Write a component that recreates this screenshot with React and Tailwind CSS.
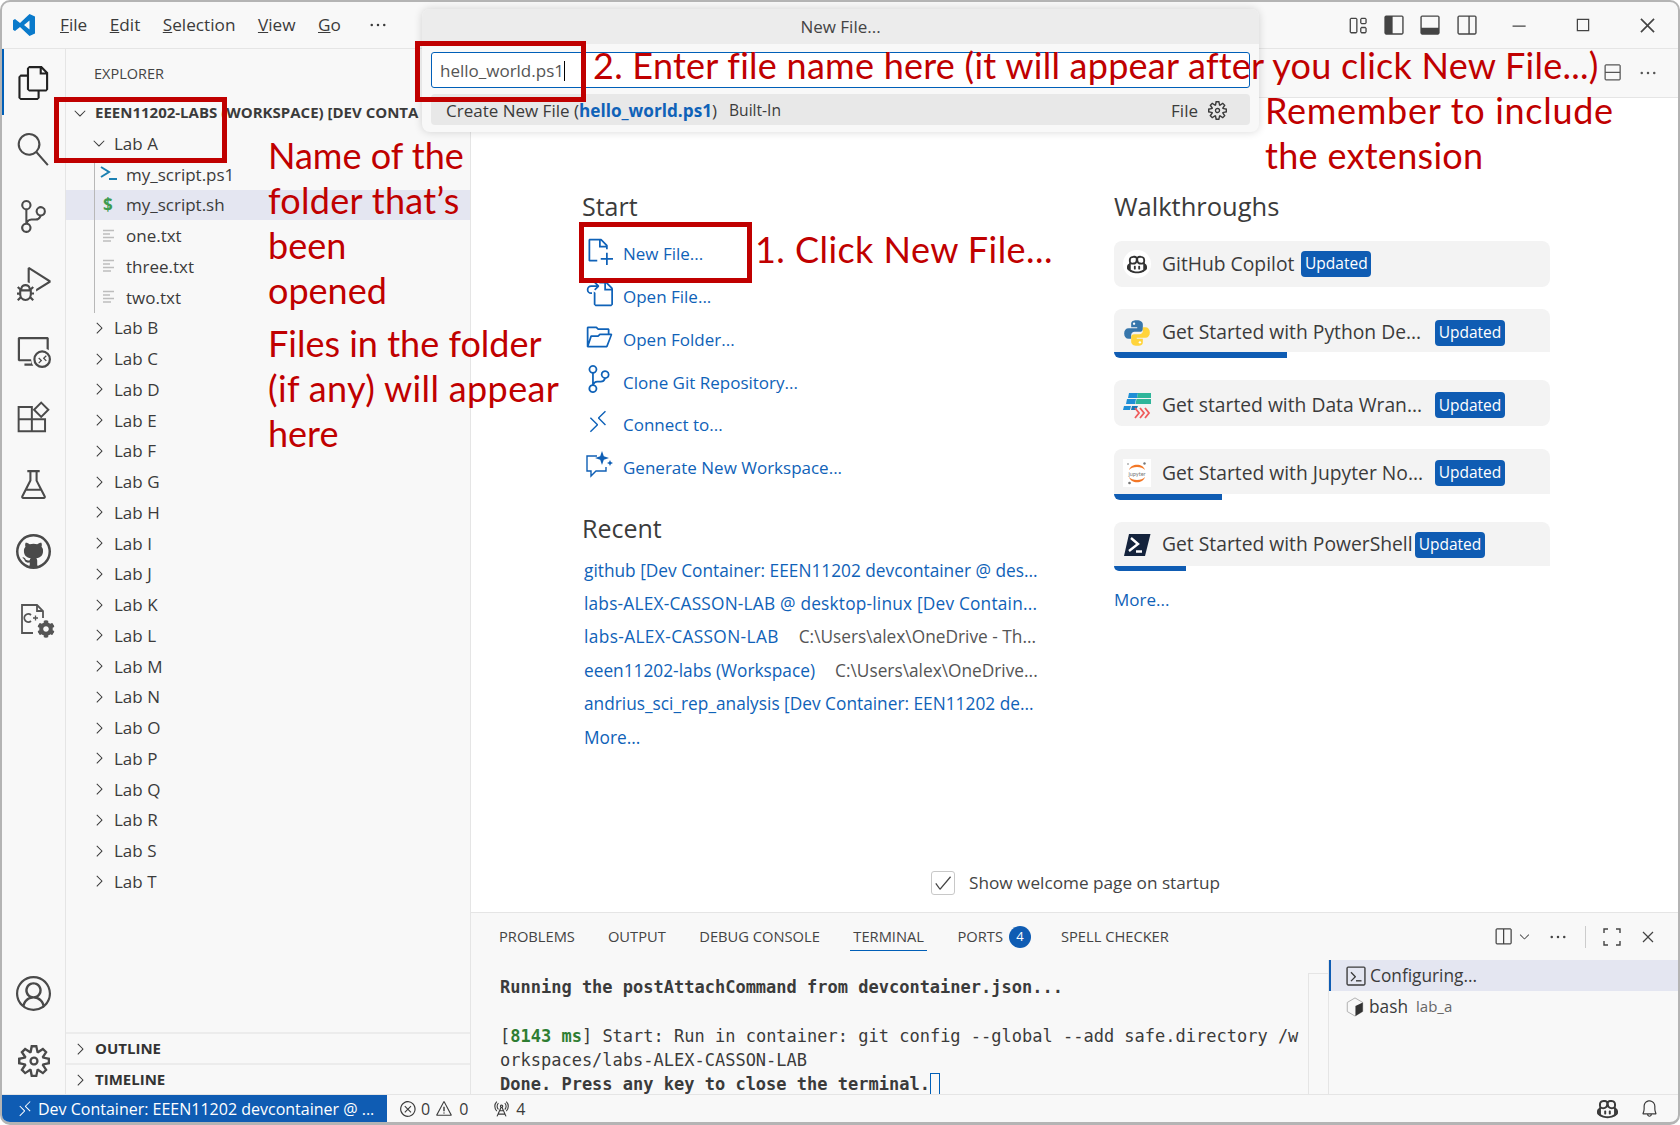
import React from 'react';
import { FaCog } from 'react-icons/fa';
import {
  VscFiles, VscSearch, VscSourceControl, VscDebugAlt, VscRemoteExplorer, VscBeaker,
  VscGithub, VscAccount, VscSettingsGear, VscChevronRight, VscChevronDown, VscLayout,
  VscLayoutSidebarLeft, VscLayoutPanel, VscLayoutSidebarRightOff, VscChromeMinimize, VscChromeMaximize,
  VscChromeClose, VscEllipsis, VscNewFile, VscGoToFile, VscFolderOpened, VscRemote, VscCopilot,
  VscSplitHorizontal, VscSplitVertical, VscBell, VscError, VscWarning, VscRadioTower, VscTerminal,
  VscClose, VscCheck,
} from 'react-icons/vsc';

const labs = 'BCDEFGHIJKLMNOPQRST'.split('');

const recent = [
  ['github [Dev Container: EEEN11202 devcontainer @ des...', '', ''],
  ['labs-ALEX-CASSON-LAB @ desktop-linux [Dev Contain...', '', 'tracking-[0.2px]'],
  ['labs-ALEX-CASSON-LAB', 'C:\\Users\\alex\\OneDrive - Th...', 'tracking-[0.37px]'],
  ['eeen11202-labs (Workspace)', 'C:\\Users\\alex\\OneDrive...', ''],
  ['andrius_sci_rep_analysis [Dev Container: EEN11202 de...', '', ''],
  ['More...', '', ''],
];

const PythonLogo = () => (
  <svg viewBox="0 0 24 24" className="w-7 h-7">
    <path fill="#3776ab" d="M12 1C7 1 7 3 7 4.500V7h5.200v1H4.800C2.500 8 1 9.700 1 12.500S2.500 17 4.800 17H7v-3c0-1.800 1.200-3 3-3h4.500c1.500 0 2.500-1 2.500-2.500V4.500C17 2.500 15 1 12 1z" />
    <circle cx="9.500" cy="4" r="1" fill="#fff" />
    <path fill="#ffd43b" d="M12 23c5 0 5-2 5-3.500V17h-5.200v-1h7.400c2.300 0 3.800-1.700 3.800-4.500S21.500 7 19.200 7H17v3c0 1.800-1.200 3-3 3H9.500C8 13 7 14 7 15.500v4C7 21.500 9 23 12 23z" />
    <circle cx="14.500" cy="20" r="1" fill="#fff" />
  </svg>
);

const WranglerLogo = () => (
  <svg viewBox="0 0 28 28" className="w-7 h-7">
    <path fill="#1f8fd6" d="M6 2h9l-1 5H5zM4 8h9l-1 5H3zM1 15h7l-1 4H0z" />
    <path fill="#2fb59a" d="M15 2h13v5H14zM13.500 8H28v5H12.500z" />
    <path fill="#1678b8" d="M9 15h6l-2 4H8z" />
    <path fill="none" stroke="#ef5b5b" strokeWidth="1.800" d="M12 17l4 5-4 5M17 17l4 5-4 5M22 17l4 5-4 5" />
  </svg>
);

const JupyterLogo = () => (
  <svg viewBox="0 0 28 28" className="w-7 h-7 bg-white">
    <path fill="#f37726" d="M6 11C8 4 20 4 22 11 19 7 9 7 6 11zM6 18C8 25 20 25 22 18 19 22 9 22 6 18z" />
    <text x="14" y="16.500" fontSize="5.500" textAnchor="middle" fill="#777" fontFamily="Lato, sans-serif">jupyter</text>
    <circle cx="21.500" cy="4.500" r="1.200" fill="#777" />
    <circle cx="6.500" cy="24" r="1.300" fill="#777" />
    <circle cx="5" cy="5" r="0.800" fill="#777" />
  </svg>
);

const PowerShellLogo = () => (
  <svg viewBox="0 0 28 28" className="w-7 h-7">
    <path fill="#14233c" d="M6 3h21.500L22 25H1z" />
    <path fill="none" stroke="#fff" strokeWidth="2.400" d="M8 7l7 6-9 7M13 20.500h6" />
  </svg>
);

const walkthroughs = [
  { title: 'GitHub Copilot', icon: <span className="w-7 h-7 rounded-full bg-white flex items-center justify-center text-[#333]"><VscCopilot size={20} /></span>, bg: 'h-[46px]', bar: '', end: 'ml-[7px]' },
  { title: 'Get Started with Python De...', icon: <PythonLogo />, bg: 'h-[43px] pt-[4px]', bar: 'w-[173px] h-[6px]', end: 'absolute left-[321px]' },
  { title: 'Get started with Data Wran...', icon: <WranglerLogo />, bg: 'h-[46px] pt-[4px]', bar: '', end: 'absolute left-[321px]' },
  { title: 'Get Started with Jupyter No...', icon: <JupyterLogo />, bg: 'h-[45px] pt-[4px]', bar: 'w-[108px] h-[6px]', end: 'absolute left-[321px]' },
  { title: 'Get Started with PowerShell', icon: <PowerShellLogo />, bg: 'h-[44px] pt-[2px]', bar: 'w-[72px] h-[5px]', end: 'absolute left-[301px]' },
];

const ExtensionsIcon = () => (
  <svg viewBox="0 0 30 30" className="w-[33px] h-[33px]" fill="none" stroke="currentColor" strokeWidth="1.800">
    <path d="M1.500 5.500h12v22h-12zM1.500 16.500h24v11h-12M13.500 16.500v11" />
    <path d="M22 1.500L28.500 8 22 14.500 15.500 8z" />
  </svg>
);

const ScreenFullIcon = () => (
  <svg viewBox="0 0 18 18" className="w-[18px] h-[18px]" fill="none" stroke="currentColor" strokeWidth="1.400">
    <path d="M1 5V1h4M13 1h4v4M17 13v4h-4M5 17H1v-4" />
  </svg>
);

const GenerateIcon = () => (
  <svg viewBox="0 0 28 28" className="w-[28px] h-[28px]" fill="none" stroke="#0f5fb5" strokeWidth="1.400">
    <path d="M12 5H2v15h4v5l5-5h10v-4" />
    <path fill="#0f5fb5" stroke="none" d="M17 0l1.800 5.200L24 7l-5.200 1.800L17 14l-1.800-5.200L10 7l5.200-1.800zM25 9l.9 2.100L28 12l-2.100.9L25 15l-.9-2.100L22 12l2.100-.9z" />
  </svg>
);

const CppIcon = () => (
  <div className="relative w-8 h-8">
    <svg viewBox="0 0 32 32" className="w-8 h-8" fill="none" stroke="#555" strokeWidth="1.800">
      <path d="M15 30H4V2h15l6 6v7" />
      <path d="M19 2v6h6" />
      <path d="M13 12a4 4 0 1 0 0 6" />
      <path d="M15 15h5M17.500 12.500v5" strokeWidth="1.300" />
    </svg>
    <FaCog className="absolute right-[-5px] bottom-[-3px] bg-[#f8f8f8] rounded-full text-[#555]" size={18} />
  </div>
);

const BashIcon = () => (
  <svg viewBox="0 0 20 22" className="w-5 h-5">
    <path fill="none" stroke="#aaa" strokeWidth="1" d="M10 1l8.500 5v10L10 21l-8.500-5V6z" />
    <path fill="#333" d="M10.500 10l8-4v10l-8 5z" />
  </svg>
);

const PsIcon = () => (
  <svg viewBox="0 0 18 18" className="w-[18px] h-[18px]" fill="none" stroke="#1b80b2" strokeWidth="2">
    <path d="M1 2l8 5-8 5M9 14h8" />
  </svg>
);

const TxtIcon = () => (
  <svg viewBox="0 0 14 14" className="w-[14px] h-[14px] ml-[2px]" fill="none" stroke="#bdbdbd" strokeWidth="1.500">
    <path d="M1 1.500h11M1 5h7M1 8.500h11M1 12h8" />
  </svg>
);

const Row = ({ active, children }) => (
  <div className={`h-[30.75px] flex items-center shrink-0 ${active ? 'bg-[#e4e6f1]' : ''}`}>{children}</div>
);

const FileRow = ({ name, icon, active }) => (
  <Row active={active}>
    <div className="w-[28px] h-full border-l border-[#b8b8b8] ml-[28px] flex items-center pl-[5px]">{icon}</div>
    <span className="ml-[4px]">{name}</span>
  </Row>
);

const Annot = ({ className, children }) => (
  <div className={`absolute font-['Lato',sans-serif] text-[#c00000] text-[36px] leading-[45px] whitespace-nowrap ${className}`}>{children}</div>
);

const RedBox = ({ className }) => <div className={`absolute border-[5px] border-[#c00000] ${className}`} />;

const Menu = ({ first, rest }) => (
  <span><span className="underline">{first}</span>{rest}</span>
);

export default function App() {
  const activity = [
    <VscFiles size={34} className="text-[#222]" />, <VscSearch size={33} className="-scale-x-100" />, <VscSourceControl size={33} />,
    <VscDebugAlt size={34} />, <VscRemoteExplorer size={34} />, <ExtensionsIcon />, <VscBeaker size={33} />,
    <VscGithub size={35} />, <CppIcon />,
  ];

  return (
    <div className="relative w-[1680px] h-[1125px] bg-white font-['Open_Sans',sans-serif] text-[#3b3b3b] overflow-hidden">
      <div className="w-full h-full flex flex-col border-2 border-b-[3px] border-[#b4b4b4] rounded-[10px] overflow-hidden bg-[#f8f8f8]">
        {/* title bar */}
        <div className="h-[47px] shrink-0 flex items-center border-b border-[#e5e5e5] text-[17.200px]">
          <svg viewBox="0 0 24 24" className="w-[24px] h-[24px] ml-[10px]">
            <path fill="#0a7acb" d="M17.500 1L23 3.500v17L17.500 23 8 14l-5 4-2-1.200V7.200L3 6l5 4zM17.500 7.500L12 12l5.500 4.500z" />
          </svg>
          <div className="flex items-center gap-[22.500px] ml-[24px]">
            <Menu first="F" rest="ile" />
            <Menu first="E" rest="dit" />
            <Menu first="S" rest="election" />
            <Menu first="V" rest="iew" />
            <Menu first="G" rest="o" />
            <VscEllipsis size={20} className="ml-[5px]" />
          </div>
          <div className="ml-auto flex items-center text-[#444]">
            <VscLayout size={21} />
            <VscLayoutSidebarLeft size={22} className="ml-[15px]" />
            <VscLayoutPanel size={22} className="ml-[14px]" />
            <VscLayoutSidebarRightOff size={22} className="ml-[15px]" />
            <VscChromeMinimize size={19} className="ml-[31px]" />
            <VscChromeMaximize size={20} className="ml-[45px]" />
            <VscChromeClose size={21} className="ml-[44px] mr-[20px]" />
          </div>
        </div>

        <div className="flex-1 flex min-h-0">
          {/* activity bar */}
          <div className="relative w-[64px] shrink-0 flex flex-col border-r border-[#e5e5e5] text-[#4a4a4a]">
            <div className="absolute left-0 top-0 w-[2px] h-[66px] bg-[#005fb8]" />
            {activity.map((icon, i) => (
              <div key={i} className="h-[67px] flex items-center justify-center shrink-0">{icon}</div>
            ))}
            <div className="mt-auto h-[67px] flex items-center justify-center"><VscAccount size={35} /></div>
            <div className="h-[67px] flex items-center justify-center"><VscSettingsGear size={32} /></div>
          </div>

          {/* explorer */}
          <div className="w-[405px] shrink-0 flex flex-col border-r border-[#e5e5e5] text-[17px] leading-none">
            <div className="h-[48.300px] shrink-0 flex items-center pl-[28px] pt-[3px] text-[14.500px] text-[#444]">EXPLORER</div>
            <Row>
              <VscChevronDown size={18} className="ml-[5px]" />
              <span className="ml-[6px] text-[15px] font-bold whitespace-nowrap">EEEN11202-LABS (WORKSPACE) [DEV CONTA</span>
            </Row>
            <Row>
              <VscChevronDown size={18} className="ml-[24px]" />
              <span className="ml-[6px]">Lab A</span>
            </Row>
            <FileRow name="my_script.ps1" icon={<PsIcon />} />
            <FileRow name="my_script.sh" active icon={<span className="text-[#3e9b4f] font-bold text-[17px] ml-[3px]">$</span>} />
            <FileRow name="one.txt" icon={<TxtIcon />} />
            <FileRow name="three.txt" icon={<TxtIcon />} />
            <FileRow name="two.txt" icon={<TxtIcon />} />
            {labs.map((l) => (
              <Row key={l}>
                <VscChevronRight size={18} className="ml-[24px]" />
                <span className="ml-[6px]">Lab {l}</span>
              </Row>
            ))}
            <div className="mt-auto h-[31px] shrink-0 border-t-2 border-[#ececec] flex items-center">
              <VscChevronRight size={18} className="ml-[5px]" />
              <span className="ml-[6px] text-[15px] font-bold text-[#333]">OUTLINE</span>
            </div>
            <div className="h-[31px] shrink-0 border-t-2 border-[#ececec] flex items-center">
              <VscChevronRight size={18} className="ml-[5px]" />
              <span className="ml-[6px] text-[15px] font-bold text-[#333]">TIMELINE</span>
            </div>
          </div>

          {/* editor + panel */}
          <div className="flex-1 min-w-0 flex flex-col">
            <div className="h-[49px] shrink-0 border-b border-[#e5e5e5] flex items-center justify-end text-[#555]">
              <VscSplitVertical size={20} className="mr-[16px]" />
              <VscEllipsis size={20} className="mr-[20px]" />
            </div>

            <div className="flex-1 min-h-0 bg-white flex flex-col">
              <div className="flex-1 flex pt-[91px] pl-[111px]">
                <div className="w-[532px] shrink-0">
                  <div className="h-[36px] flex items-center text-[25px]">Start</div>
                  <div className="mt-[7.600px] text-[#0f62b8] text-[17px]">
                    {[
                      [<VscNewFile size={28} />, 'New File...'],
                      [<VscGoToFile size={28} />, 'Open File...'],
                      [<VscFolderOpened size={28} />, 'Open Folder...'],
                      [<VscSourceControl size={28} />, 'Clone Git Repository...'],
                      [<VscRemote size={26} />, 'Connect to...'],
                      [<GenerateIcon />, 'Generate New Workspace...'],
                    ].map(([icon, label]) => (
                      <div key={label} className="h-[42.800px] flex items-center">
                        <span className="w-[41px] pl-[3px] -mt-[6px] shrink-0">{icon}</span>
                        {label}
                      </div>
                    ))}
                  </div>
                  <div className="mt-[21.600px] h-[36px] flex items-center text-[25px]">Recent</div>
                  <div className="mt-[7px] pl-[2px] text-[17.300px]">
                    {recent.map(([link, path, spacing]) => (
                      <div key={link} className="h-[33.400px] flex items-center whitespace-nowrap">
                        <span className={`text-[#0f62b8] ${spacing}`}>{link}</span>
                        {path && <span className="ml-[20px] text-[#555]">{path}</span>}
                      </div>
                    ))}
                  </div>
                </div>

                <div className="w-[436px]">
                  <div className="h-[35px] flex items-center text-[25.500px]">Walkthroughs</div>
                  <div className="mt-[17px] flex flex-col gap-[22.200px]">
                    {walkthroughs.map((w) => (
                      <div key={w.title}>
                        <div className={`relative flex items-center bg-[#f3f3f3] rounded-t-lg pl-[9px] ${w.bar ? '' : 'rounded-b-lg'} ${w.bg}`}>
                          {w.icon}
                          <span className="ml-[11px] text-[19.300px] whitespace-nowrap">{w.title}</span>
                          <span className={`h-[26px] w-[70px] rounded-[4px] bg-[#0f5cb3] text-white text-[15.500px] flex items-center justify-center ${w.end}`}>Updated</span>
                        </div>
                        {w.bar && <div className={`bg-[#0f5cb3] rounded-bl-lg ${w.bar}`} />}
                      </div>
                    ))}
                  </div>
                  <div className="mt-[16px] text-[#0f62b8] text-[17px] leading-[26px]">More...</div>
                </div>
              </div>

              <div className="pb-[16px] pl-[2px] flex items-center justify-center text-[17.200px] text-[#444]">
                <span className="w-[24px] h-[24px] border border-[#c8c8c8] rounded-[3px] flex items-center justify-center">
                  <VscCheck size={20} />
                </span>
                <span className="ml-[14px]">Show welcome page on startup</span>
              </div>
            </div>

            {/* panel */}
            <div className="h-[182px] shrink-0 border-t border-[#e5e5e5] flex flex-col">
              <div className="h-[47px] shrink-0 flex items-center pl-[28px] text-[14.700px] text-[#444]">
                <span>PROBLEMS</span>
                <span className="ml-[33px]">OUTPUT</span>
                <span className="ml-[33.500px]">DEBUG CONSOLE</span>
                <span className="relative ml-[33.500px]">TERMINAL
                  <span className="absolute -left-[3px] -right-[3px] top-[25px] h-[1px] bg-[#005fb8]" />
                </span>
                <span className="ml-[33.500px]">PORTS</span>
                <span className="ml-[6px] w-[22px] h-[22px] rounded-full bg-[#0f5cb3] text-white text-[13px] flex items-center justify-center">4</span>
                <span className="ml-[30px]">SPELL CHECKER</span>
                <div className="ml-auto flex items-center text-[#444]">
                  <VscSplitHorizontal size={20} />
                  <VscChevronDown size={15} className="ml-[4px]" />
                  <VscEllipsis size={20} className="ml-[16px]" />
                  <span className="ml-[17px] w-px h-[22px] bg-[#ccc]" />
                  <span className="ml-[17px]"><ScreenFullIcon /></span>
                  <VscClose size={20} className="ml-[17px] mr-[20px]" />
                </div>
              </div>
              <div className="flex-1 flex min-h-0">
                <div className="flex-1 pl-[29px] pt-[15px] font-['DejaVu_Sans_Mono',monospace] text-[17px] leading-[24.300px] whitespace-nowrap overflow-hidden">
                  <div className="font-bold">Running the postAttachCommand from devcontainer.json...</div>
                  <div className="h-[24.300px]" />
                  <div>[<span className="text-[#2e7d32] font-bold">8143 ms</span>] Start: Run in container: git config --global --add safe.directory /w</div>
                  <div>orkspaces/labs-ALEX-CASSON-LAB</div>
                  <div className="flex items-center font-bold">Done. Press any key to close the terminal.
                    <span className="w-[10px] h-[22px] border border-[#005fb8]" />
                  </div>
                </div>
                <div className="w-[20px] mt-[13px] shrink-0 border-l border-t border-[#e5e5e5]" />
                <div className="w-[350px] shrink-0 border-l border-[#e5e5e5] text-[17.300px]">
                  <div className="h-[31px] bg-[#e4e6f1] border-l-2 border-[#0f5cb3] flex items-center pl-[14px]">
                    <VscTerminal size={22} />
                    <span className="ml-[3px]">Configuring...</span>
                  </div>
                  <div className="h-[31px] flex items-center pl-[16px]">
                    <BashIcon />
                    <span className="ml-[4px]">bash</span>
                    <span className="ml-[8px] text-[15px] text-[#666]">lab_a</span>
                  </div>
                </div>
              </div>
            </div>
          </div>
        </div>

        {/* status bar */}
        <div className="h-[28px] shrink-0 border-t border-[#e5e5e5] flex items-center text-[16px]">
          <div className="w-[385px] h-full bg-[#0f5cb3] text-white flex items-center pl-[14px] whitespace-nowrap">
            <VscRemote size={18} />
            <span className="ml-[4px]">Dev Container: EEEN11202 devcontainer @ ...</span>
          </div>
          <VscError size={18} className="ml-[12px]" />
          <span className="ml-[4px]">0</span>
          <VscWarning size={18} className="ml-[5px]" />
          <span className="ml-[6px]">0</span>
          <VscRadioTower size={18} className="ml-[24px]" />
          <span className="ml-[6px]">4</span>
          <div className="ml-auto flex items-center">
            <VscCopilot size={21} />
            <VscBell size={19} className="ml-[22px] mr-[19px]" />
          </div>
        </div>
      </div>

      {/* quick input */}
      <div className="absolute left-[422px] top-[9px] w-[837px] h-[123px] rounded-lg bg-[#f8f8f8] shadow-[0_0_8px_rgba(0,0,0,0.16)] overflow-hidden text-[17px]">
        <div className="h-[35px] bg-[#ececec] flex items-center justify-center text-[#444]">New File...</div>
        <div className="mx-[9px] mt-[8px] h-[36px] bg-white border border-[#005fb8] rounded-[3px] flex items-center pl-[8px] pt-[2px] text-[#555]">
          hello_world.ps1<span className="w-px h-[20px] bg-black" />
        </div>
        <div className="mx-[9px] mt-[6px] h-[31px] bg-[#e8e8e8] rounded-[4px] flex items-center pl-[15px] pt-[2px]">
          <span>Create New File (<span className="font-bold text-[#0f62b8] text-[17.200px]">hello_world.ps1</span>)</span>
          <span className="ml-[12px] text-[15.600px]">Built-In</span>
          <span className="ml-auto">File</span>
          <VscSettingsGear size={19} className="ml-[10px] mr-[23px]" />
        </div>
      </div>

      {/* tutorial annotations */}
      <RedBox className="left-[54px] top-[97px] w-[173px] h-[66px]" />
      <RedBox className="left-[415px] top-[41px] w-[171px] h-[61px]" />
      <RedBox className="left-[579px] top-[222px] w-[173px] h-[61px]" />
      <Annot className="left-[268px] top-[133px]">Name of the<br /><span className="tracking-[0.3px]">folder that’s</span><br />been<br />opened</Annot>
      <Annot className="left-[268px] top-[321px]">Files in the folder<br /><span className="tracking-[0.35px]">(if any) will appear</span><br />here</Annot>
      <Annot className="left-[593px] top-[43px] tracking-[0.25px]">2. Enter file name here (it will appear after you click New File...)</Annot>
      <Annot className="left-[1265px] top-[88px]"><span className="tracking-[0.7px]">Remember to include</span><br /><span className="tracking-[0.3px]">the extension</span></Annot>
      <Annot className="left-[755px] top-[227px] tracking-[0.45px]">1. Click New File...</Annot>
    </div>
  );
}
